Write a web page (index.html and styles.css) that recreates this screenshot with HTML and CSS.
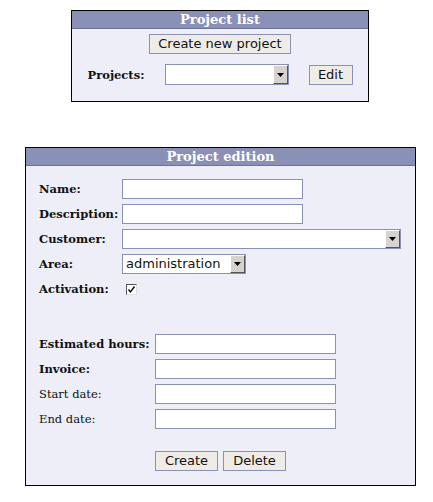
FILE: index.html
```html
<!DOCTYPE html>
<html>
<head>
<meta charset="utf-8">
<link rel="stylesheet" href="styles.css">
</head>
<body>
<div class="panel panel-list">
  <div class="panel-head">Project list</div>
  <div class="panel-body list-body">
    <button class="btn btn-wide">Create new project</button>
    <div class="list-row">
      <span class="label bold">Projects:</span>
      <div class="select sel-projects"><span class="sel-text"></span><span class="arrow"><svg width="7" height="4" viewBox="0 0 7 4"><polygon points="0,0 7,0 3.5,4" fill="#000"/></svg></span></div>
      <button class="btn btn-edit">Edit</button>
    </div>
  </div>
</div>

<div class="panel panel-edit">
  <div class="panel-head">Project edition</div>
  <div class="panel-body edit-body">
    <div class="grid grid-a">
      <span class="label bold">Name:</span><input class="field" type="text">
      <span class="label bold">Description:</span><input class="field" type="text">
      <span class="label bold">Customer:</span>
      <div class="select sel-customer"><span class="sel-text"></span><span class="arrow"><svg width="7" height="4" viewBox="0 0 7 4"><polygon points="0,0 7,0 3.5,4" fill="#000"/></svg></span></div>
      <span class="label bold">Area:</span>
      <div class="select sel-area"><span class="sel-text">administration</span><span class="arrow"><svg width="7" height="4" viewBox="0 0 7 4"><polygon points="0,0 7,0 3.5,4" fill="#000"/></svg></span></div>
      <span class="label bold">Activation:</span>
      <span class="check-cell"><span class="check"><svg width="9" height="9" viewBox="0 0 9 9"><polyline points="1.5,4.5 3.5,7 7.5,1.5" fill="none" stroke="#000" stroke-width="1.3"/></svg></span></span>
    </div>
    <div class="grid grid-b">
      <span class="label bold">Estimated hours:</span><input class="field" type="text">
      <span class="label bold">Invoice:</span><input class="field" type="text">
      <span class="label">Start date:</span><input class="field" type="text">
      <span class="label">End date:</span><input class="field" type="text">
    </div>
    <div class="actions">
      <button class="btn">Create</button>
      <button class="btn">Delete</button>
    </div>
  </div>
</div>
</body>
</html>
```
FILE: styles.css
```css
body {
  margin: 8px;
  background: #ffffff;
  font-family: "DejaVu Serif", serif;
}
.panel {
  border: 1px solid #000;
  background: #eeeef8;
  box-sizing: border-box;
}
.panel-list {
  width: 298px;
  height: 92px;
  margin: 2px 0 0 63px;
}
.panel-edit {
  width: 391px;
  height: 339px;
  margin: 45px 0 0 17px;
}
.panel-head {
  height: 17px;
  background: #8a90b6;
  border-bottom: 1px solid #6c7196;
  color: #fff;
  font-weight: bold;
  font-size: 13px;
  line-height: 17px;
  text-align: center;
}
.list-body {
  display: flex;
  flex-direction: column;
  align-items: center;
  padding-top: 5px;
}
.list-row {
  display: flex;
  align-items: center;
  margin-top: 10px;
  margin-left: 0px;
}
.list-row .label {
  width: 77px;
}
.label {
  font-size: 11.5px;
  color: #111;
}
.bold { font-weight: bold; }
.btn {
  font-family: "DejaVu Sans", sans-serif;
  font-size: 13px;
  color: #111;
  background: #efebe7;
  border: 1px solid #8a90b6;
  height: 20px;
  padding: 0 8px;
  margin: 0;
  line-height: 18px;
  box-sizing: border-box;
}
.btn-wide { width: 142px; height: 20px; }
.btn-edit { width: 44px; height: 20px; margin-left: 20px; }
.select {
  display: flex;
  align-items: stretch;
  height: 20px;
  box-sizing: border-box;
  border: 1px solid #8a90b6;
  background: #fff;
}
.sel-text {
  flex: 1;
  font-family: "DejaVu Sans", sans-serif;
  font-size: 13px;
  line-height: 18px;
  padding-left: 3px;
  color: #111;
  white-space: nowrap;
  overflow: hidden;
}
.arrow {
  width: 15px;
  box-sizing: border-box;
  background: #d6d3ce;
  border-top: 1px solid #fff;
  border-left: 1px solid #fff;
  border-right: 1px solid #555;
  border-bottom: 1px solid #555;
  display: flex;
  align-items: center;
  justify-content: center;
}
.sel-projects { width: 124px; height: 21px; }
.sel-customer { width: 279px; }
.sel-area { width: 124px; }
.edit-body {
  padding: 13px 0 0 13px;
}
.grid {
  display: grid;
  row-gap: 5px;
  align-items: center;
}
.grid-a {
  grid-template-columns: 83px auto;
  justify-items: start;
}
.grid-b {
  grid-template-columns: 116px auto;
  margin-top: 35px;
}
.field {
  width: 181px;
  height: 20px;
  box-sizing: border-box;
  border: 1px solid #8a90b6;
  background: #fff;
  margin: 0;
  padding: 0 3px;
}
.check-cell {
  height: 20px;
  display: flex;
  align-items: center;
}
.check {
  width: 11px;
  height: 11px;
  box-sizing: border-box;
  margin-left: 4px;
  background: #fff;
  border-top: 1px solid #555;
  border-left: 1px solid #555;
  border-right: 1px solid #ddd;
  border-bottom: 1px solid #ddd;
  display: flex;
  align-items: center;
  justify-content: center;
}
.actions {
  display: flex;
  gap: 5px;
  margin: 22px 0 0 116px;
}
.actions .btn:first-child { width: 63px; }
.actions .btn:last-child { width: 63px; }
```
